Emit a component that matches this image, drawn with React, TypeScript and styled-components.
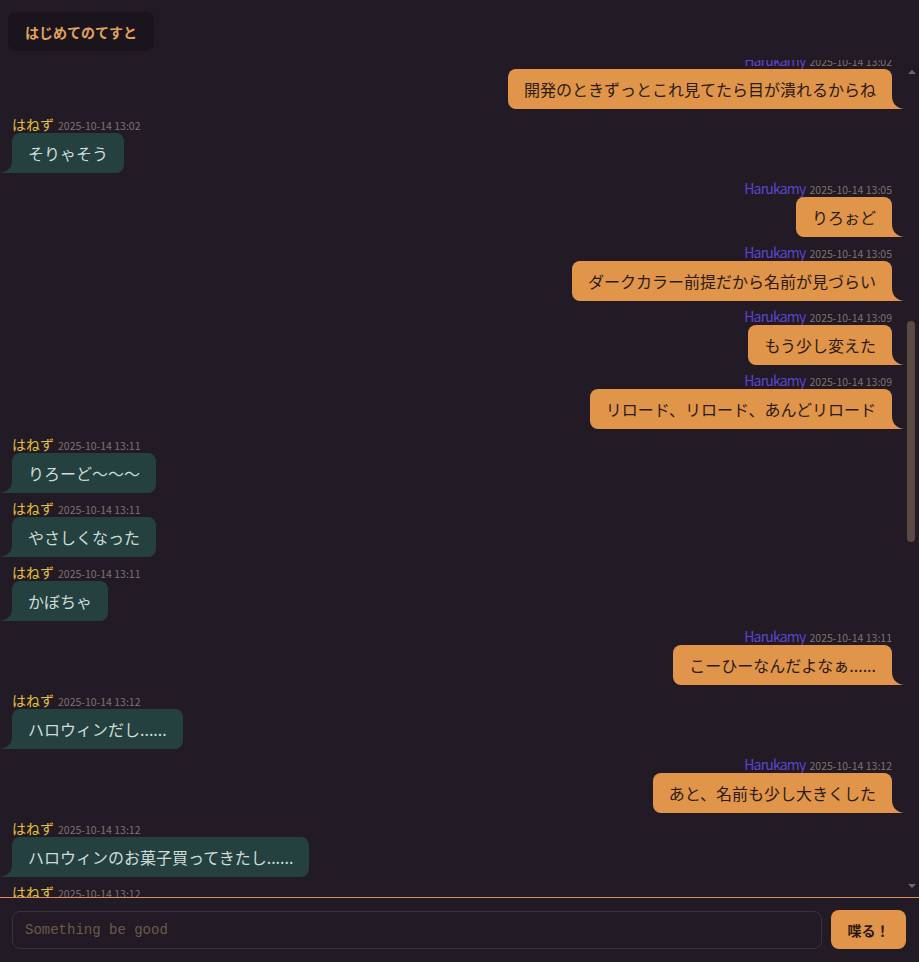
import React, { useCallback, useLayoutEffect, useRef, useState } from "react";
import styled, { createGlobalStyle } from "styled-components";

const GlobalStyle = createGlobalStyle`
  html, body {
    margin: 0;
    padding: 0;
    height: 100%;
    background: #221a25;
    font-family: "Noto Sans CJK JP", "Noto Sans", sans-serif;
  }
  #root { height: 100%; }
  * { box-sizing: border-box; }
`;

type Msg = { who: "mine" | "other"; time: string; text: string; anchor?: boolean };

const ME = "Harukamy";
const OTHER = "はねず";

const messages: Msg[] = [
  { who: "mine", time: "2025-10-14 12:41", text: "てすと" },
  { who: "mine", time: "2025-10-14 12:41", text: "届いてる？" },
  { who: "other", time: "2025-10-14 12:43", text: "とどいてるよ" },
  { who: "other", time: "2025-10-14 12:43", text: "はやい" },
  { who: "mine", time: "2025-10-14 12:44", text: "よかった" },
  { who: "mine", time: "2025-10-14 12:45", text: "自動で更新されるはず" },
  { who: "other", time: "2025-10-14 12:47", text: "ほんとだ" },
  { who: "other", time: "2025-10-14 12:48", text: "すごい" },
  { who: "mine", time: "2025-10-14 12:52", text: "色も変えてみた" },
  { who: "other", time: "2025-10-14 12:55", text: "くらい" },
  { who: "other", time: "2025-10-14 12:55", text: "まっくら" },
  { who: "mine", time: "2025-10-14 12:58", text: "ダークモードです" },
  { who: "other", time: "2025-10-14 13:00", text: "なるほど" },
  { who: "mine", time: "2025-10-14 13:01", text: "目にやさしい" },
  { who: "mine", time: "2025-10-14 13:02", text: "開発のときずっとこれ見てたら目が潰れるからね", anchor: true },
  { who: "other", time: "2025-10-14 13:02", text: "そりゃそう" },
  { who: "mine", time: "2025-10-14 13:05", text: "りろぉど" },
  { who: "mine", time: "2025-10-14 13:05", text: "ダークカラー前提だから名前が見づらい" },
  { who: "mine", time: "2025-10-14 13:09", text: "もう少し変えた" },
  { who: "mine", time: "2025-10-14 13:09", text: "リロード、リロード、あんどリロード" },
  { who: "other", time: "2025-10-14 13:11", text: "りろーど〜〜〜" },
  { who: "other", time: "2025-10-14 13:11", text: "やさしくなった" },
  { who: "other", time: "2025-10-14 13:11", text: "かぼちゃ" },
  { who: "mine", time: "2025-10-14 13:11", text: "こーひーなんだよなぁ......" },
  { who: "other", time: "2025-10-14 13:12", text: "ハロウィンだし......" },
  { who: "mine", time: "2025-10-14 13:12", text: "あと、名前も少し大きくした" },
  { who: "other", time: "2025-10-14 13:12", text: "ハロウィンのお菓子買ってきたし......" },
  { who: "other", time: "2025-10-14 13:12", text: "かぼちゃのやつ" },
  { who: "mine", time: "2025-10-14 13:13", text: "いいね" },
  { who: "mine", time: "2025-10-14 13:13", text: "あとで食べよう" },
  { who: "other", time: "2025-10-14 13:14", text: "うん" },
  { who: "mine", time: "2025-10-14 13:15", text: "送信ボタンも変えた" },
  { who: "other", time: "2025-10-14 13:15", text: "喋る！" },
  { who: "other", time: "2025-10-14 13:15", text: "かわいい" },
  { who: "mine", time: "2025-10-14 13:16", text: "でしょ" },
  { who: "mine", time: "2025-10-14 13:17", text: "エンターでも送れる" },
  { who: "other", time: "2025-10-14 13:18", text: "べんり" },
  { who: "other", time: "2025-10-14 13:18", text: "てすと" },
  { who: "mine", time: "2025-10-14 13:19", text: "てすと" },
  { who: "other", time: "2025-10-14 13:20", text: "ちゃんと並んでる" },
  { who: "mine", time: "2025-10-14 13:21", text: "スクロールも大丈夫そう" },
  { who: "other", time: "2025-10-14 13:22", text: "よき" },
  { who: "mine", time: "2025-10-14 13:23", text: "今日はここまで" },
  { who: "other", time: "2025-10-14 13:23", text: "おつかれ" },
  { who: "mine", time: "2025-10-14 13:24", text: "おつかれさま" },
  { who: "other", time: "2025-10-14 13:25", text: "また明日" },
  { who: "mine", time: "2025-10-14 13:25", text: "またね" },
];

const Page = styled.div`
  height: 100vh;
  display: flex;
  flex-direction: column;
  background: #221a25;
`;

const Header = styled.header`
  display: flex;
  align-items: center;
  padding: 12px 8px 9px;
`;

const RoomButton = styled.button`
  height: 39px;
  padding: 0 17px;
  border: none;
  border-radius: 8px;
  background: #1a141c;
  color: #e1a25e;
  font-family: "Noto Sans CJK JP", sans-serif;
  font-weight: 700;
  font-size: 14px;
  cursor: pointer;
`;

const ScrollArea = styled.div`
  flex: 1;
  min-height: 0;
  display: flex;
`;

const Scroller = styled.div`
  flex: 1;
  min-width: 0;
  overflow-y: auto;
  position: relative;
  scrollbar-width: none;
  &::-webkit-scrollbar {
    display: none;
  }
`;

const Rail = styled.div`
  width: 15px;
  flex-shrink: 0;
  display: flex;
  flex-direction: column;
`;

const Arrow = styled.div<{ $dir: "up" | "down" }>`
  height: 18px;
  display: flex;
  justify-content: center;
  align-items: ${(p) => (p.$dir === "up" ? "flex-end" : "flex-start")};
  padding: ${(p) => (p.$dir === "up" ? "0 0 4px 1px" : "5px 0 0 1px")};

  &::before {
    content: "";
    width: 0;
    height: 0;
    border-left: 4px solid transparent;
    border-right: 4px solid transparent;
    ${(p) =>
      p.$dir === "up"
        ? "border-bottom: 4px solid #6d6a6c;"
        : "border-top: 4px solid #6d6a6c;"}
  }
`;

const Track = styled.div`
  flex: 1;
  position: relative;
`;

const Thumb = styled.div`
  position: absolute;
  left: 3px;
  width: 8px;
  border-radius: 4px;
  background: #5b4944;
`;

const List = styled.div`
  display: flex;
  flex-direction: column;
  gap: 6px;
  padding: 12px;
`;

const Row = styled.div<{ $mine: boolean }>`
  display: flex;
  flex-direction: column;
  align-items: ${(p) => (p.$mine ? "flex-end" : "flex-start")};
`;

const Meta = styled.div`
  display: flex;
  align-items: baseline;
  gap: 4px;
  height: 18px;
  line-height: 18px;
  white-space: nowrap;
`;

const Name = styled.span<{ $mine: boolean }>`
  font-size: 14px;
  color: ${(p) => (p.$mine ? "#5947c9" : "#e6c03c")};
  letter-spacing: ${(p) => (p.$mine ? "-0.8px" : "0")};
`;

const Time = styled.span`
  font-size: 10.5px;
  color: #7e7370;
`;

const Bubble = styled.div<{ $mine: boolean }>`
  position: relative;
  padding: 8px 16px;
  font-size: 16px;
  line-height: 24px;
  border-radius: 8px;
  ${(p) =>
    p.$mine
      ? `border-bottom-right-radius: 0; background: #e0954a; color: #2b1c13;`
      : `border-bottom-left-radius: 0; background: #244140; color: #cfdcd9;`}

  &::after {
    content: "";
    position: absolute;
    bottom: 0;
    width: 12px;
    height: 13px;
    background: inherit;
    ${(p) =>
      p.$mine
        ? `right: -12px; clip-path: path("M0 0 C0 7 4 12 12 13 L0 13 Z");`
        : `left: -12px; clip-path: path("M12 0 C12 7 8 12 0 13 L12 13 Z");`}
  }
`;

const Footer = styled.form`
  display: flex;
  align-items: center;
  gap: 9px;
  padding: 12px 13px 13px 12px;
  border-top: 1px solid #d98e5c;
`;

const Input = styled.input`
  flex: 1;
  height: 38px;
  padding: 0 12px;
  border: 1px solid #3b3141;
  border-radius: 8px;
  background: transparent;
  color: #d8d0cc;
  font-family: "Liberation Mono", monospace;
  font-size: 14px;
  outline: none;

  &::placeholder {
    color: #6c5a4b;
  }
`;

const SendButton = styled.button`
  width: 75px;
  height: 39px;
  border: none;
  border-radius: 8px;
  background: #e0954a;
  color: #2a1a12;
  font-family: "Noto Sans CJK JP", sans-serif;
  font-weight: 700;
  font-size: 14px;
  cursor: pointer;
`;

export default function App() {
  const scrollerRef = useRef<HTMLDivElement>(null);
  const anchorRef = useRef<HTMLDivElement>(null);
  const trackRef = useRef<HTMLDivElement>(null);
  const [thumb, setThumb] = useState({ top: 0, height: 0 });

  const updateThumb = useCallback(() => {
    const s = scrollerRef.current;
    const t = trackRef.current;
    if (!s || !t) return;
    const trackLen = t.clientHeight;
    const ratio = s.clientHeight / s.scrollHeight;
    const height = Math.max(24, trackLen * ratio);
    const max = s.scrollHeight - s.clientHeight;
    const top = max > 0 ? ((trackLen - height) * s.scrollTop) / max : 0;
    setThumb({ top, height });
  }, []);

  useLayoutEffect(() => {
    const s = scrollerRef.current;
    const a = anchorRef.current;
    if (s && a) s.scrollTop = a.offsetTop + 9;
    updateThumb();
  }, [updateThumb]);

  return (
    <>
      <GlobalStyle />
      <Page>
        <Header>
          <RoomButton type="button">はじめてのてすと</RoomButton>
        </Header>
        <ScrollArea>
          <Scroller ref={scrollerRef} onScroll={updateThumb}>
            <List>
              {messages.map((m, i) => {
                const mine = m.who === "mine";
                return (
                  <Row key={i} $mine={mine} ref={m.anchor ? anchorRef : undefined}>
                    <Meta>
                      <Name $mine={mine}>{mine ? ME : OTHER}</Name>
                      <Time>{m.time}</Time>
                    </Meta>
                    <Bubble $mine={mine}>{m.text}</Bubble>
                  </Row>
                );
              })}
            </List>
          </Scroller>
          <Rail>
            <Arrow $dir="up" />
            <Track ref={trackRef}>
              <Thumb style={{ top: thumb.top, height: thumb.height }} />
            </Track>
            <Arrow $dir="down" />
          </Rail>
        </ScrollArea>
        <Footer onSubmit={(e) => e.preventDefault()}>
          <Input placeholder="Something be good" />
          <SendButton type="submit">喋る！</SendButton>
        </Footer>
      </Page>
    </>
  );
}
